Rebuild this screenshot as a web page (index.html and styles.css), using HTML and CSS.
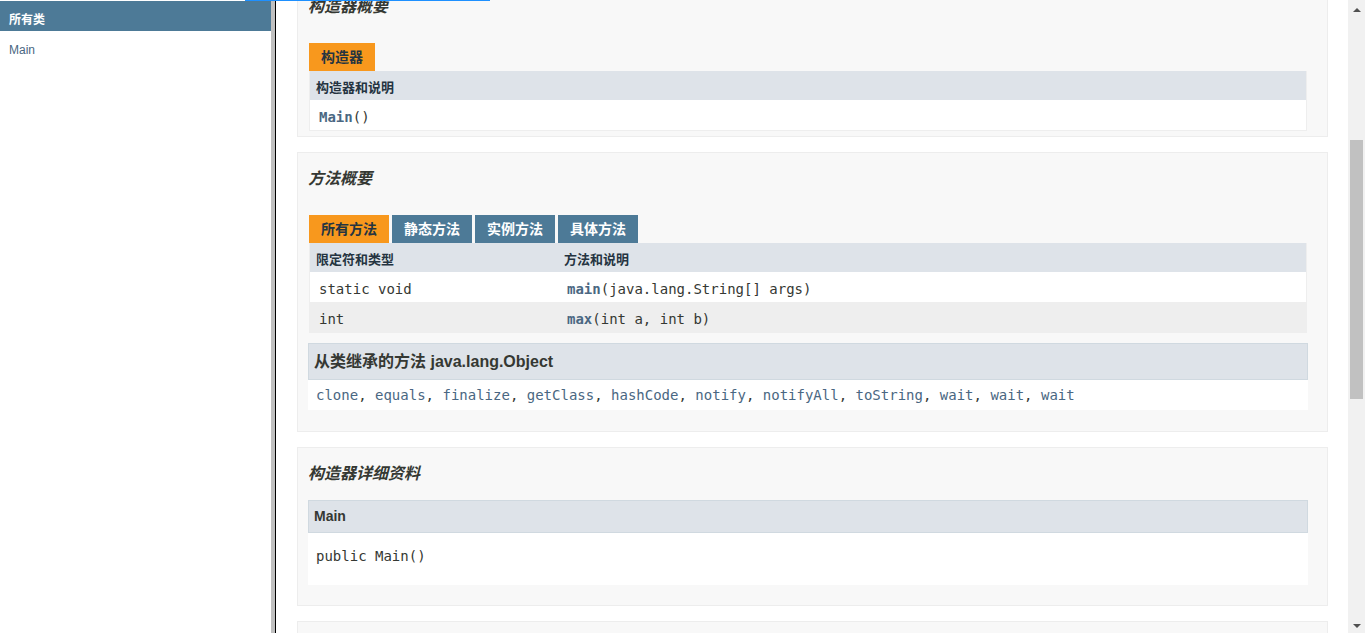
FILE: index.html
```html
<!DOCTYPE html>
<html lang="zh">
<head>
<meta charset="utf-8">
<title>Main</title>
<link rel="stylesheet" href="styles.css">
</head>
<body>
<div class="progress"></div>
<div class="frames">
  <aside class="nav">
    <h1 class="bar">所有类</h1>
    <ul class="class-list"><li><a href="#">Main</a></li></ul>
  </aside>
  <div class="splitter"></div>
  <div class="doc">
    <div class="viewport">
      <div class="content">
        <section class="block first">
          <h3 class="block-title">构造器概要</h3>
          <div class="tabs"><span class="tab active">构造器</span></div>
          <table class="summary">
            <thead><tr><th>构造器和说明</th></tr></thead>
            <tbody><tr class="row"><td><code><a class="member" href="#">Main</a>()</code></td></tr></tbody>
          </table>
        </section>

        <section class="block">
          <h3 class="block-title">方法概要</h3>
          <div class="tabs">
            <span class="tab active">所有方法</span>
            <span class="tab">静态方法</span>
            <span class="tab">实例方法</span>
            <span class="tab">具体方法</span>
          </div>
          <table class="summary">
            <colgroup><col class="col-first"><col></colgroup>
            <thead><tr><th>限定符和类型</th><th>方法和说明</th></tr></thead>
            <tbody>
              <tr class="row"><td><code>static void</code></td><td><code><a class="member" href="#">main</a>(java.lang.String[]&nbsp;args)</code></td></tr>
              <tr class="alt"><td><code>int</code></td><td><code><a class="member" href="#">max</a>(int&nbsp;a, int&nbsp;b)</code></td></tr>
            </tbody>
          </table>
          <div class="inherited">
            <h3 class="inherited-title">从类继承的方法&nbsp;java.lang.Object</h3>
            <code class="inherited-list"><a href="#">clone</a>, <a href="#">equals</a>, <a href="#">finalize</a>, <a href="#">getClass</a>, <a href="#">hashCode</a>, <a href="#">notify</a>, <a href="#">notifyAll</a>, <a href="#">toString</a>, <a href="#">wait</a>, <a href="#">wait</a>, <a href="#">wait</a></code>
          </div>
        </section>

        <section class="block">
          <h3 class="block-title detail">构造器详细资料</h3>
          <div class="detail-item">
            <h4 class="detail-name">Main</h4>
            <pre class="signature">public&nbsp;Main()</pre>
          </div>
        </section>

        <section class="block">
          <h3 class="block-title">方法详细资料</h3>
        </section>
      </div>
    </div>
    <div class="scrollbar">
      <div class="sb-btn"><span class="arrow up"></span></div>
      <div class="sb-track"><div class="sb-thumb"></div></div>
      <div class="sb-btn"><span class="arrow down"></span></div>
    </div>
  </div>
</div>
</body>
</html>
```

FILE: styles.css
```css
html, body {
  margin: 0;
  height: 100%;
  overflow: hidden;
}

body {
  font-family: "Liberation Sans", "Noto Sans CJK SC", sans-serif;
  font-size: 14px;
  color: #353833;
  background: #ffffff;
  position: relative;
}

a {
  color: #4A6782;
  text-decoration: none;
}

code, pre {
  font-family: "DejaVu Sans Mono", "Noto Sans CJK SC", monospace;
  font-size: 14px;
}

.progress {
  position: absolute;
  top: 0;
  left: 245px;
  width: 245px;
  height: 1px;
  background: #1e90ff;
  z-index: 5;
}

.frames {
  display: flex;
  height: 633px;
}

/* left frame */
.nav {
  width: 271px;
  flex: none;
  padding-top: 1px;
}

.bar {
  margin: 0;
  background: #4D7A97;
  color: #ffffff;
  font-size: 12px;
  font-weight: bold;
  line-height: 16px;
  padding: 11px 5px 3px 9px;
}

.class-list {
  list-style: none;
  margin: 0;
  padding: 12px 9px;
  font-size: 12px;
  line-height: 15px;
}

.splitter {
  width: 4px;
  flex: none;
  background: #c0c0c0;
  border-right: 1px solid #000000;
}

/* right frame */
.doc {
  flex: 1;
  min-width: 0;
  display: flex;
}

.viewport {
  flex: 1;
  min-width: 0;
  overflow: hidden;
}

.content {
  padding: 0 20px 0 21px;
}

.block {
  background: #f8f8f8;
  border: 1px solid #ededed;
  padding: 0 20px 5px 10px;
  margin-bottom: 15px;
}

.block.first {
  margin-top: -20px;
}

.block-title {
  margin: 16px 0 26px;
  font-size: 16px;
  line-height: 20px;
  font-style: italic;
  font-weight: bold;
  color: #353833;
}

.block-title.detail {
  margin-bottom: 16px;
}

.tabs {
  display: flex;
  gap: 3px;
  margin-left: 1px;
}

.tab {
  padding: 0 12px;
  line-height: 28px;
  height: 28px;
  font-size: 14px;
  font-weight: bold;
  background: #4D7A97;
  color: #ffffff;
  white-space: nowrap;
}

.tab.active {
  background: #F8981D;
  color: #253441;
}

.summary {
  width: calc(100% - 1px);
  margin-left: 1px;
  border-collapse: separate;
  border-spacing: 0;
  table-layout: fixed;
  border-left: 1px solid #eeeeee;
  border-right: 1px solid #eeeeee;
  border-bottom: 1px solid #eeeeee;
}

.col-first {
  width: 248px;
}

.summary th {
  background: #dee3e9;
  text-align: left;
  padding: 8px 3px 3px 6px;
  font-size: 13px;
  line-height: 18px;
  font-weight: bold;
  color: #253441;
}

.summary td {
  padding: 8px 3px 3px 9px;
  line-height: 19px;
  vertical-align: top;
  white-space: nowrap;
}

.summary tr.row td {
  background: #ffffff;
}

.summary tr.alt td {
  background: #eeeeee;
}

.member {
  font-weight: bold;
  color: #4A6782;
}

.inherited {
  margin: 10px -1px 16px 0;
  background: #ffffff;
  padding: 0 0 5px 8px;
}

.inherited-title {
  margin: 0 0 6px -8px;
  background: #dee3e9;
  border: 1px solid #d0d9e0;
  padding: 7px 5px;
  font-size: 16px;
  line-height: 21px;
  font-weight: bold;
  font-style: normal;
  color: #353833;
}

.inherited-list {
  display: block;
  line-height: 19px;
  white-space: nowrap;
}

.detail-item {
  margin: 0 -1px 15px 0;
  background: #ffffff;
  padding: 0 0 5px 8px;
}

.detail-name {
  margin: 0 0 6px -8px;
  background: #dee3e9;
  border: 1px solid #d0d9e0;
  padding: 7px 5px;
  font-size: 14px;
  line-height: 17px;
  font-weight: bold;
  color: #353833;
}

.signature {
  margin: 14px 0 14px;
  line-height: 19px;
  color: #353833;
}

/* scrollbar */
.scrollbar {
  width: 17px;
  flex: none;
  background: #f1f1f1;
  display: flex;
  flex-direction: column;
}

.sb-btn {
  height: 17px;
  display: flex;
  align-items: center;
  justify-content: center;
}

.arrow {
  width: 0;
  height: 0;
  border-left: 4px solid transparent;
  border-right: 4px solid transparent;
}

.arrow.up {
  border-bottom: 4px solid #505050;
  margin-top: 3px;
}

.arrow.down {
  border-top: 4px solid #505050;
  margin-bottom: -3px;
}

.sb-track {
  flex: 1;
  padding: 0 2px;
}

.sb-thumb {
  margin-top: 123px;
  height: 259px;
  background: #c1c1c1;
}
```
